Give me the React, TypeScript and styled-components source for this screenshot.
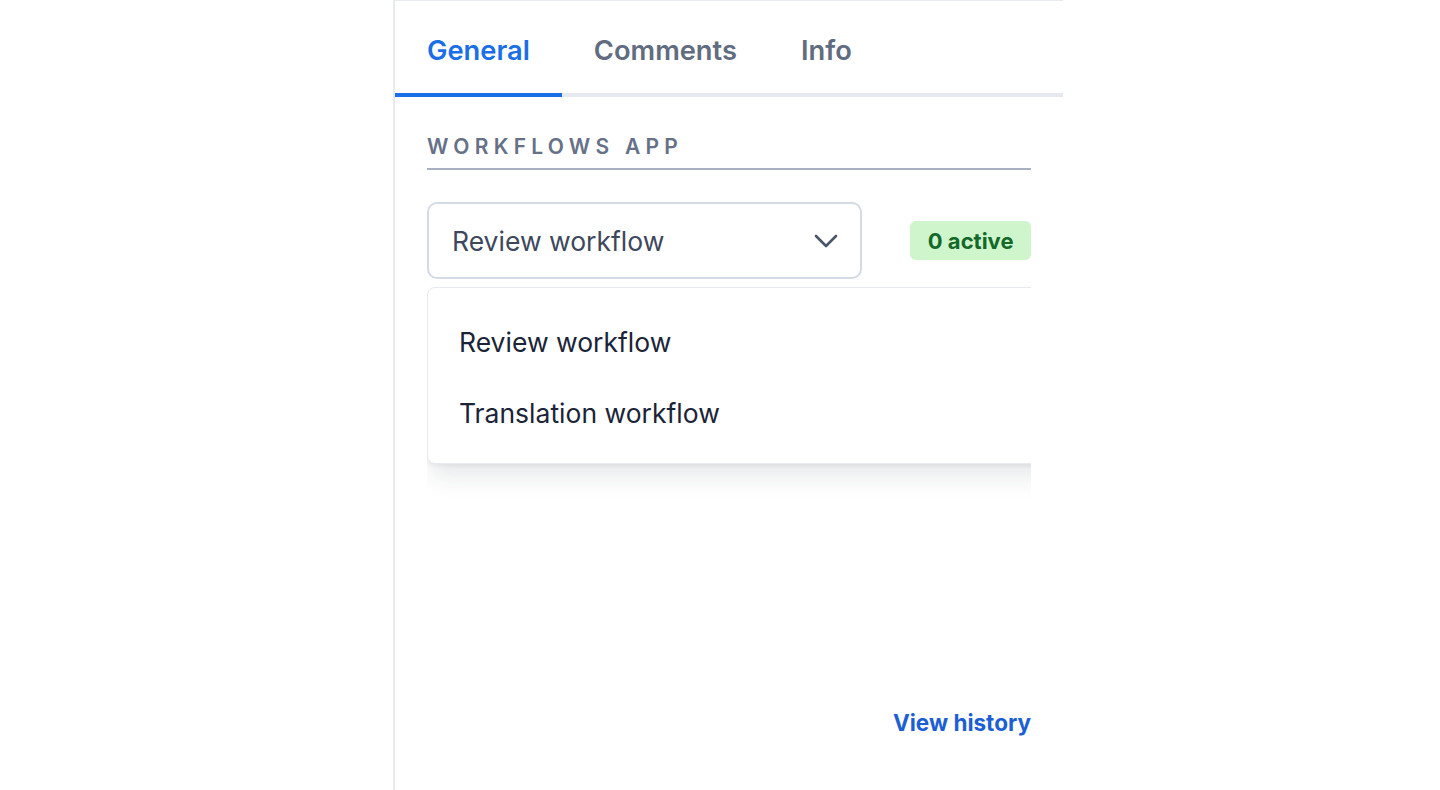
import React, { useState } from "react";
import styled, { createGlobalStyle } from "styled-components";

const GlobalStyle = createGlobalStyle`
  * { box-sizing: border-box; }
  html, body {
    margin: 0;
    padding: 0;
    background: #ffffff;
    font-family: "Inter", "Noto Sans", "Liberation Sans", sans-serif;
  }
`;

const Page = styled.div`
  display: flex;
  min-height: 100vh;
`;

const Panel = styled.aside`
  display: flex;
  flex-direction: column;
  width: 670px;
  min-height: 100vh;
  margin-left: 393px;
  border-left: 2px solid #e8ecf1;
  border-top: 1px solid #e8ecf1;
`;

const TabBar = styled.nav`
  display: flex;
  height: 96px;
  border-bottom: 4px solid #e6e9ee;
`;

const Tab = styled.button<{ $active?: boolean }>`
  display: flex;
  align-items: center;
  padding: 6px 32px 0;
  margin-bottom: -4px;
  border: none;
  border-bottom: 4px solid ${({ $active }) => ($active ? "#1a6fe6" : "transparent")};
  background: none;
  font-family: inherit;
  font-size: 27.3px;
  font-weight: 600;
  color: ${({ $active }) => ($active ? "#1a6fe6" : "#616c80")};
  cursor: pointer;
`;

const Body = styled.div`
  flex: 1;
  padding: 37px 32px 0;
`;

const SectionTitle = styled.h2`
  margin: 0;
  padding-bottom: 9px;
  border-bottom: 2px solid #a7b1c1;
  font-size: 21px;
  line-height: 25px;
  font-weight: 600;
  letter-spacing: 0.25em;
  text-transform: uppercase;
  color: #667188;
`;

const Clip = styled.div`
  overflow: hidden;
  padding-bottom: 40px;
`;

const SelectRow = styled.div`
  display: flex;
  align-items: center;
  justify-content: space-between;
  margin-top: 32px;
`;

const SelectBox = styled.button`
  display: flex;
  flex-shrink: 0;
  align-items: center;
  justify-content: space-between;
  width: 435px;
  height: 77px;
  padding: 0 22px 0 23px;
  border: 2px solid #d3dbe5;
  border-radius: 10px;
  background: #ffffff;
  font-family: inherit;
  font-size: 26.5px;
  color: #3d485c;
  cursor: pointer;
`;

const Badge = styled.span`
  display: inline-flex;
  flex-shrink: 0;
  align-items: center;
  height: 39px;
  padding: 0 17.5px;
  border-radius: 6px;
  background: #cff5cc;
  color: #14682a;
  font-size: 22px;
  font-weight: 700;
  white-space: nowrap;
`;

const Menu = styled.ul`
  width: calc(100% + 40px);
  margin: 8px 0 0;
  padding: 18px 0 15px;
  list-style: none;
  background: #ffffff;
  border: 1px solid #e7eaef;
  border-radius: 8px;
  box-shadow: 0 16px 24px -4px rgba(30, 41, 59, 0.11), 0 2px 4px rgba(30, 41, 59, 0.06);
`;

const MenuItem = styled.li`
  display: flex;
  align-items: center;
  height: 71px;
  padding: 0 31px;
  font-size: 26.5px;
  color: #1b2437;
  cursor: pointer;
`;

const Footer = styled.footer`
  display: flex;
  justify-content: flex-end;
  padding: 0 32px 54px;
`;

const HistoryLink = styled.a`
  font-size: 22.5px;
  font-weight: 700;
  color: #1c5fd4;
  text-decoration: none;
`;

const Chevron = () => (
  <svg width="24" height="14" viewBox="0 0 24 14" fill="none">
    <path d="M2 2l10 10L22 2" stroke="#4b5569" strokeWidth="2.6" strokeLinecap="round" strokeLinejoin="round" />
  </svg>
);

const tabs = ["General", "Comments", "Info"];
const workflows = ["Review workflow", "Translation workflow"];

const App = () => {
  const [active, setActive] = useState("General");
  const [selected, setSelected] = useState(workflows[0]);

  return (
    <Page>
      <GlobalStyle />
      <Panel>
        <TabBar>
          {tabs.map((tab) => (
            <Tab key={tab} $active={tab === active} onClick={() => setActive(tab)}>
              {tab}
            </Tab>
          ))}
        </TabBar>
        <Body>
          <SectionTitle>Workflows app</SectionTitle>
          <Clip>
            <SelectRow>
              <SelectBox>
                {selected}
                <Chevron />
              </SelectBox>
              <Badge>0 active</Badge>
            </SelectRow>
            <Menu>
              {workflows.map((w) => (
                <MenuItem key={w} onClick={() => setSelected(w)}>
                  {w}
                </MenuItem>
              ))}
            </Menu>
          </Clip>
        </Body>
        <Footer>
          <HistoryLink href="#">View history</HistoryLink>
        </Footer>
      </Panel>
    </Page>
  );
};

export default App;
